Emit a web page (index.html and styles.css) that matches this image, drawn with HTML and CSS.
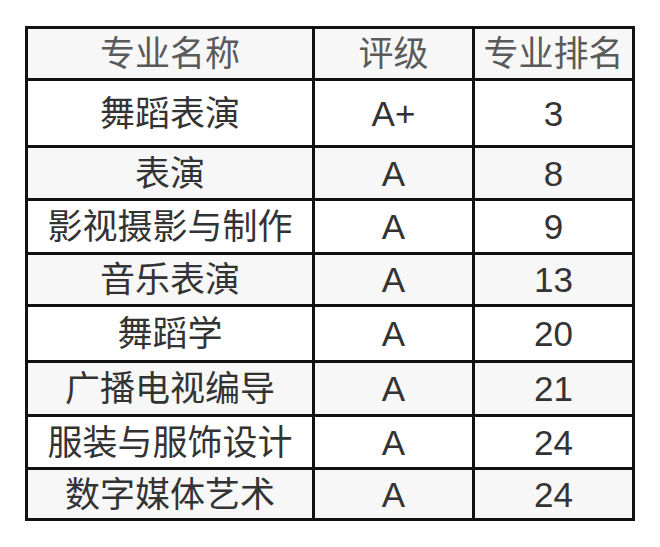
FILE: index.html
```html
<!DOCTYPE html>
<html lang="zh-CN">
<head>
<meta charset="utf-8">
<title>专业排名</title>
<link rel="stylesheet" href="styles.css">
</head>
<body>
<div class="rank-table">
  <div class="cell head">专业名称</div><div class="cell head">评级</div><div class="cell head">专业排名</div>
  <div class="cell">舞蹈表演</div><div class="cell">A+</div><div class="cell">3</div>
  <div class="cell alt">表演</div><div class="cell alt">A</div><div class="cell alt">8</div>
  <div class="cell">影视摄影与制作</div><div class="cell">A</div><div class="cell">9</div>
  <div class="cell alt">音乐表演</div><div class="cell alt">A</div><div class="cell alt">13</div>
  <div class="cell">舞蹈学</div><div class="cell">A</div><div class="cell">20</div>
  <div class="cell alt">广播电视编导</div><div class="cell alt">A</div><div class="cell alt">21</div>
  <div class="cell">服装与服饰设计</div><div class="cell">A</div><div class="cell">24</div>
  <div class="cell alt">数字媒体艺术</div><div class="cell alt">A</div><div class="cell alt">24</div>
</div>
</body>
</html>
```
FILE: styles.css
```css
html, body {
  margin: 0;
  padding: 0;
  background: #ffffff;
}
body {
  padding: 26px 0 0 25px;
  font-family: "Liberation Sans", "Noto Sans CJK SC", sans-serif;
}
.rank-table {
  display: grid;
  width: 610px;
  box-sizing: border-box;
  padding: 3px;
  gap: 3px;
  background: #111111;
  grid-template-columns: 284px 157px 157px;
  grid-template-rows: 49px 64px 50px 51px 49px 53px 51px 50px 48px;
}
.cell {
  display: flex;
  align-items: center;
  justify-content: center;
  background: #ffffff;
  color: #333333;
  font-size: 35px;
  line-height: 1;
  white-space: nowrap;
}
.cell.alt,
.cell.head {
  background: #f7f7f7;
}
.cell.head {
  color: #5a5a5a;
}
```
